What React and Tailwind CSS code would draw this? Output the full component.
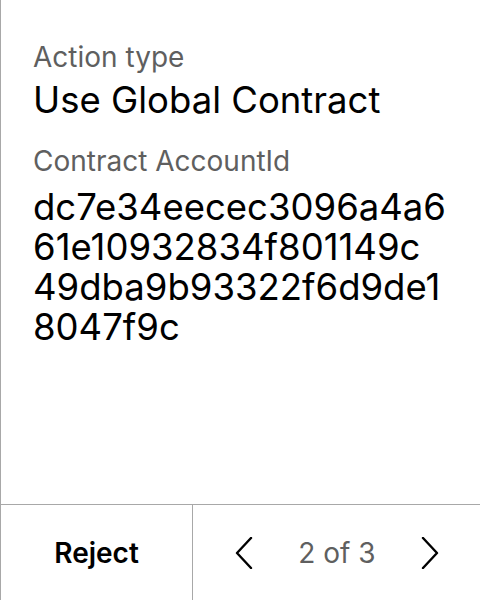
import React from "react";

const ACCOUNT_ID = "dc7e34eecec3096a4a661e10932834f801149c49dba9b93322f6d9de18047f9c";

function Chevron({ dir }) {
  return (
    <svg width="18" height="32" viewBox="0 0 18 32" fill="none" className="text-black">
      <path
        d={dir === "left" ? "M16 1 L2 16 L16 31" : "M2 1 L16 16 L2 31"}
        stroke="currentColor"
        strokeWidth="2.4"
        strokeLinecap="round"
        strokeLinejoin="round"
      />
    </svg>
  );
}

export default function App() {
  // the id wraps every 19 characters
  const lines = ACCOUNT_ID.match(/.{1,19}/g);

  return (
    <div className="flex h-[600px] w-[480px] flex-col border-l border-[#a8a8a8] bg-white font-['Inter',sans-serif] text-black">
      <div className="flex-1 pl-8 pr-4 pt-[41px]">
        <div className="text-[28px] leading-[32px] text-[#5f5f5f]">Action type</div>
        <div className="mt-[7px] text-[36.5px] leading-[40px]">Use Global Contract</div>
        <div className="mt-[25px] text-[28px] leading-[32px] text-[#5f5f5f]">Contract AccountId</div>
        <div className="mt-[10px] text-[36.5px] leading-[40px]">
          {lines.map((line) => (
            <div key={line}>{line}</div>
          ))}
        </div>
      </div>
      <div className="flex h-[96px] border-t border-[#a8a8a8]">
        <button className="flex w-[192px] items-center justify-center border-r border-[#a8a8a8] text-[28px] font-semibold">
          Reject
        </button>
        <div className="flex flex-1 items-center justify-between pl-[42px] pr-[41px]">
          <Chevron dir="left" />
          <span className="text-[28px] text-[#5f5f5f]">2 of 3</span>
          <Chevron dir="right" />
        </div>
      </div>
    </div>
  );
}
